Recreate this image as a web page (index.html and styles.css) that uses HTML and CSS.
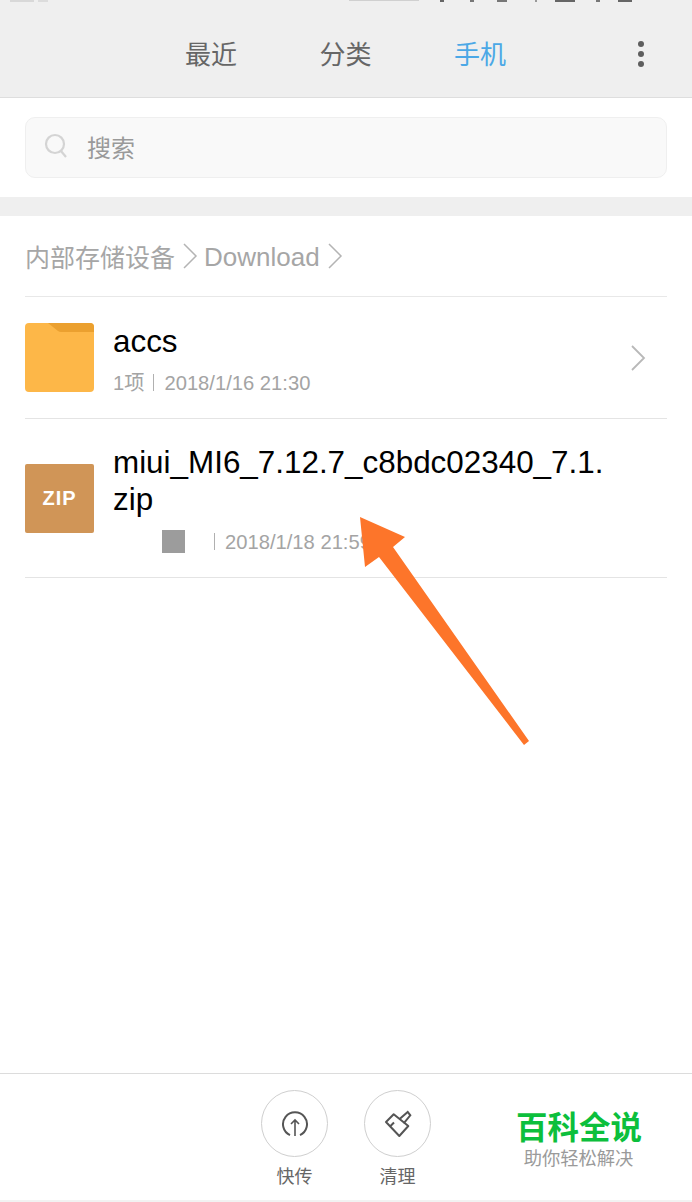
FILE: index.html
```html
<!DOCTYPE html>
<html lang="zh-CN">
<head>
    <meta charset="UTF-8">
    <meta name="viewport" content="width=device-width, initial-scale=1.0">
    <title>文件管理</title>
    <link rel="stylesheet" href="styles.css">
</head>
<body>

<div class="page">
    <header class="top-bar">
        <!-- only the bottom edge of the status bar is left in the shot -->
        <svg class="status-bits" width="692" height="3" viewBox="0 0 692 3">
            <rect x="10" width="24" height="2" fill="#d8d8d8"/>
            <rect x="38" width="10" height="2" fill="#dcdcdc"/>
            <rect x="349" width="70" height="1" fill="#d0d0d0"/>
            <rect x="440" width="4" height="2" fill="#666"/>
            <rect x="470" width="4" height="2" fill="#777"/>
            <rect x="497" width="10" height="2" fill="#777"/>
            <rect x="535" width="2" height="2" fill="#999"/>
            <rect x="555" width="20" height="2" fill="#666"/>
            <rect x="596" width="4" height="2" fill="#777"/>
            <rect x="618" width="14" height="2" fill="#666"/>
        </svg>
        <nav class="tabs">
            <a class="tab">最近</a>
            <a class="tab">分类</a>
            <a class="tab tab-active">手机</a>
        </nav>
        <div class="kebab"><i></i><i></i><i></i></div>
    </header>

    <div class="search-wrap">
        <div class="search-box">
            <svg class="search-icon" width="26" height="28" viewBox="0 0 26 28">
                <circle cx="11" cy="12" r="9" fill="none" stroke="#d4d4d4" stroke-width="2.2"/>
                <path d="M17 19l5 6" fill="none" stroke="#d4d4d4" stroke-width="2.2"/>
            </svg>
            <span>搜索</span>
        </div>
    </div>

    <div class="band"></div>

    <div class="crumbs">
        <span class="crumb-cn">内部存储设备</span>
        <svg class="crumb-arrow" width="16" height="26" viewBox="0 0 16 26"><path d="M2 1l12 12L2 25" fill="none" stroke="#b4b4b4" stroke-width="1.5"/></svg>
        <span class="crumb-en">Download</span>
        <svg class="crumb-arrow" width="16" height="26" viewBox="0 0 16 26"><path d="M2 1l12 12L2 25" fill="none" stroke="#b4b4b4" stroke-width="1.5"/></svg>
    </div>

    <section class="file-list">
        <div class="file-row row-folder">
            <svg class="file-icon" width="69" height="69" viewBox="0 0 69 69">
                <rect width="69" height="69" rx="4" fill="#fdb748"/>
                <path d="M23 0h42a4 4 0 0 1 4 4v5H36a6 6 0 0 1-3-1z" fill="#eba02f"/>
            </svg>
            <div class="file-info">
                <div class="file-name name-folder">accs</div>
                <div class="file-meta"><span>1项</span><i class="sep"></i><span>2018/1/16 21:30</span></div>
            </div>
            <svg class="row-arrow" width="16" height="28" viewBox="0 0 16 28"><path d="M2 2l12 12L2 26" fill="none" stroke="#b8b8b8" stroke-width="1.8"/></svg>
        </div>

        <div class="file-row row-zip">
            <div class="zip-icon">ZIP</div>
            <div class="file-info">
                <div class="file-name name-zip">miui_MI6_7.12.7_c8bdc02340_7.1.<br>zip</div>
                <div class="file-meta meta-zip">
                    <span class="masked"></span><i class="sep"></i><span>2018/1/18 21:59</span>
                </div>
            </div>
        </div>
    </section>

    <div class="spacer"></div>

    <footer class="bottom-bar">
        <div class="action">
            <div class="action-circle">
                <svg width="28" height="28" viewBox="0 0 28 28">
                    <path d="M9 25.2A12 12 0 1 1 19 25.2" fill="none" stroke="#555" stroke-width="2"/>
                    <path d="M14 26V10M10 14l4-4 4 4" fill="none" stroke="#555" stroke-width="1.6"/>
                </svg>
            </div>
            <span>快传</span>
        </div>
        <div class="action">
            <div class="action-circle">
                <svg width="28" height="28" viewBox="0 0 28 28">
                    <path d="M2 12l7.7-7.7L24.3 16l-9 10z" fill="none" stroke="#555" stroke-width="2" stroke-linejoin="round"/>
                    <path d="M6 16.500l4-4M15.300 9.300L23.700 2l2.600 3.300-6.600 8" fill="none" stroke="#555" stroke-width="2"/>
                </svg>
            </div>
            <span>清理</span>
        </div>
    </footer>

    <!-- overlays on top of the screenshot -->
    <svg class="arrow" width="692" height="1202" viewBox="0 0 692 1202">
        <path d="M360 517L405 537 393 547 529 741 524 745 379 557 365 567z" fill="#fd752a"/>
    </svg>
    <div class="watermark">
        <div class="wm-title">百科全说</div>
        <div class="wm-sub">助你轻松解决</div>
    </div>
</div>

</body>
</html>
```

FILE: styles.css
```css
* {
    box-sizing: border-box;
}

body {
    margin: 0;
    font-family: "Liberation Sans", "Noto Sans CJK SC", sans-serif;
    background-color: #fff;
    color: #000;
}

.page {
    position: relative;
    width: 692px;
    height: 1202px;
    overflow: hidden;
    display: flex;
    flex-direction: column;
}

/* top bar */
.top-bar {
    position: relative;
    height: 98px;
    flex: none;
    background-color: #efefef;
    border-bottom: 1px solid #dedede;
}

.status-bits {
    display: block;
}

.tabs {
    display: flex;
    gap: 82.5px;
    padding: 33px 0 0 185px;
}

.tab {
    font-size: 26px;
    line-height: 38px;
    color: #666;
}

.tab-active {
    color: #4ba8e6;
}

.kebab {
    position: absolute;
    left: 638px;
    top: 41px;
    display: flex;
    flex-direction: column;
    gap: 4px;
}

.kebab i {
    width: 6px;
    height: 6px;
    border-radius: 50%;
    background-color: #5e5e5e;
}

/* search */
.search-wrap {
    flex: none;
    height: 99px;
    padding: 19px 25px 0;
}

.search-box {
    display: flex;
    align-items: center;
    gap: 17px;
    height: 61px;
    padding: 0 0 3px 18px;
    background-color: #f9f9f9;
    border: 1px solid #efefef;
    border-radius: 10px;
    font-size: 24px;
    color: #9a9a9a;
}

.band {
    flex: none;
    height: 19px;
    background-color: #efefef;
}

/* breadcrumbs */
.crumbs {
    flex: none;
    display: flex;
    align-items: center;
    gap: 7px;
    height: 81px;
    margin: 0 25px;
    border-bottom: 1px solid #e8e8e8;
    font-size: 26px;
    color: #a6a6a6;
}

.crumb-cn {
    font-size: 25px;
}

.crumb-en {
    margin: 2px 0 0 -1px;
}

/* list */
.file-list {
    flex: none;
    padding: 0 25px;
}

.file-row {
    display: flex;
    align-items: center;
    gap: 19px;
    border-bottom: 1px solid #e4e4e4;
}

.row-folder {
    height: 122px;
}

.row-zip {
    height: 159px;
}

.row-arrow {
    margin-left: auto;
    margin-right: 21px;
}

.zip-icon {
    flex: none;
    width: 69px;
    height: 69px;
    display: flex;
    align-items: center;
    justify-content: center;
    background-color: #d09557;
    border-radius: 2px;
    color: #fff;
    font-size: 20px;
    font-weight: bold;
    letter-spacing: 1px;
}

.file-icon {
    flex: none;
}

.file-name {
    font-size: 31.4px;
    line-height: 40px;
}

.name-folder {
    margin-top: 4px;
}

.name-zip {
    line-height: 37px;
    margin-top: 4px;
}

.file-meta {
    display: flex;
    align-items: center;
    margin-top: 6px;
    font-size: 20.2px;
    line-height: 30px;
    color: #a4a4a4;
}

.sep {
    width: 1px;
    height: 17px;
    margin: 0 10px 0 9px;
    background-color: #b0b0b0;
}

.meta-zip {
    margin-top: 9px;
}

.masked {
    width: 23px;
    height: 23px;
    margin-left: 49px;
    margin-right: 20px;
    background-color: #9c9c9c;
}

.spacer {
    flex: 1;
}

/* bottom actions */
.bottom-bar {
    flex: none;
    display: flex;
    gap: 36px;
    height: 129px;
    padding: 16px 0 0 261px;
    border-top: 1px solid #dcdcdc;
    border-bottom: 2px solid #f2f2f2;
}

.action {
    display: flex;
    flex-direction: column;
    align-items: center;
    gap: 7px;
    width: 67px;
    font-size: 18px;
    line-height: 26px;
    color: #666;
}

.action-circle {
    display: flex;
    align-items: center;
    justify-content: center;
    width: 67px;
    height: 67px;
    border: 1px solid #cfcfcf;
    border-radius: 50%;
}

/* overlays */
.arrow {
    position: absolute;
    left: 0;
    top: 0;
}

.watermark {
    position: absolute;
    left: 516px;
    top: 1107px;
    width: 125px;
    text-align: center;
}

.wm-title {
    font-size: 31.5px;
    line-height: 42px;
    font-weight: bold;
    color: #0cbf3c;
    white-space: nowrap;
}

.wm-sub {
    font-size: 18.3px;
    line-height: 19px;
    color: #9a9a9a;
    white-space: nowrap;
}
```
